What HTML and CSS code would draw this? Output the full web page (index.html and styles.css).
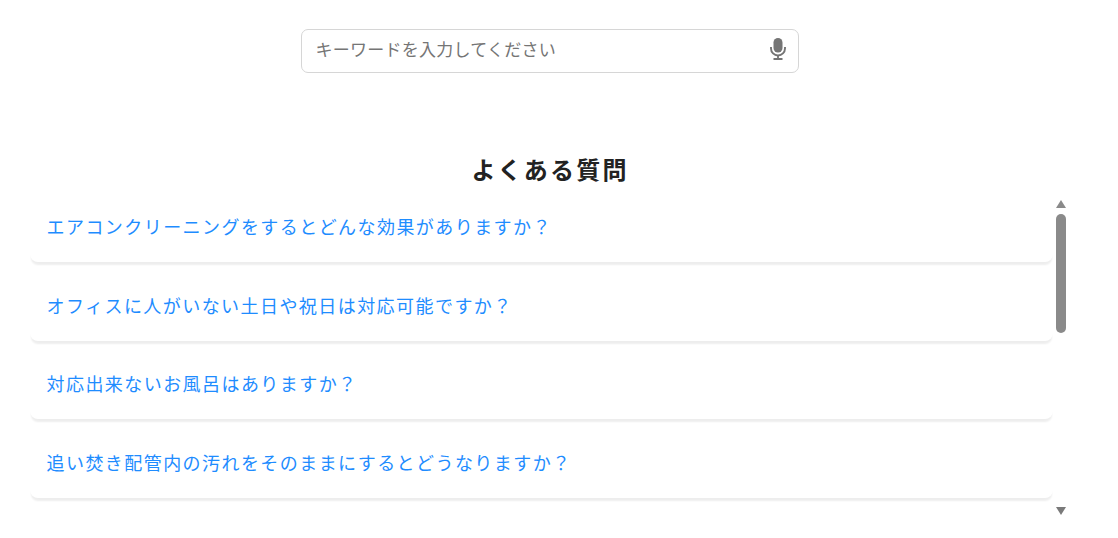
FILE: index.html
```html
<!DOCTYPE html>
<html lang="ja">
<head>
  <meta charset="UTF-8">
  <title>よくある質問</title>
  <link rel="stylesheet" href="styles.css">
</head>
<body>
  <div class="search">
    <input class="search-input" type="text" placeholder="キーワードを入力してください">
    <svg class="mic" viewBox="0 0 16 22" width="16" height="22">
      <rect x="3.5" y="0" width="9" height="14.5" rx="4.5" fill="#757575"/>
      <path d="M1 9V10.5A7 7 0 0 0 15 10.5V9" stroke="#757575" stroke-width="1.9" fill="none"/>
      <path d="M8 17V20.5M3.5 21H12.5" stroke="#757575" stroke-width="1.8" fill="none"/>
    </svg>
  </div>

  <h2 class="titulo">よくある質問</h2>

  <div class="faq">
    <div class="lista">
      <div class="card">エアコンクリーニングをするとどんな効果がありますか？</div>
      <div class="card">オフィスに人がいない土日や祝日は対応可能ですか？</div>
      <div class="card">対応出来ないお風呂はありますか？</div>
      <div class="card">追い焚き配管内の汚れをそのままにするとどうなりますか？</div>
    </div>
    <div class="barra">
      <span class="seta-cima"></span>
      <span class="trilho"><span class="polegar"></span></span>
      <span class="seta-baixo"></span>
    </div>
  </div>
</body>
</html>
```

FILE: styles.css
```css
body {
  margin: 0;
  height: 538px;
  overflow: hidden;
  background: #fff;
  font-family: "Noto Sans CJK JP", "Noto Sans", sans-serif;
}
.search {
  position: relative;
  width: 498px;
  margin: 29px 0 0 301px;
  height: 44px;
}
.search-input {
  display: block;
  box-sizing: border-box;
  width: 100%;
  height: 43.5px;
  padding: 0 44px 5px 13.5px;
  border: 1.5px solid #d6d6d6;
  border-radius: 7px;
  outline: none;
  font-family: inherit;
  font-size: 17px;
  letter-spacing: 0.25px;
}
.search-input::placeholder {
  color: #757575;
  opacity: 1;
}
.mic {
  position: absolute;
  top: 9px;
  right: 13px;
}
.titulo {
  margin: 79px 0 0 0;
  width: 1100px;
  text-align: center;
  font-size: 24px;
  line-height: 34px;
  font-weight: bold;
  letter-spacing: 2.2px;
  color: #222;
}
.faq {
  display: flex;
  gap: 3px;
  margin: 10px 0 0 30px;
  width: 1036px;
  height: 320px;
}
.lista {
  flex: 1;
  padding-top: 1px;
}
.card {
  box-sizing: border-box;
  height: 65px;
  margin-bottom: 13.67px;
  padding: 0 0 7px 16.5px;
  display: flex;
  align-items: center;
  border-radius: 8px;
  background: #fff;
  box-shadow: 0 4px 2px -1px rgba(0, 0, 0, 0.07);
  color: #1e8cff;
  font-size: 18px;
  letter-spacing: 1.44px;
}
.barra {
  width: 10px;
  display: flex;
  flex-direction: column;
  align-items: center;
}
.seta-cima, .seta-baixo {
  width: 0;
  height: 0;
  border-left: 5.5px solid transparent;
  border-right: 5.5px solid transparent;
}
.seta-cima {
  margin-top: 4px;
  border-bottom: 8px solid #8a8a8a;
}
.seta-baixo {
  margin-bottom: 1px;
  border-top: 8px solid #7a7a7a;
}
.trilho {
  flex: 1;
  width: 10px;
  padding-top: 6px;
}
.polegar {
  display: block;
  height: 119px;
  border-radius: 5px;
  background: #8a8a8a;
}
```
